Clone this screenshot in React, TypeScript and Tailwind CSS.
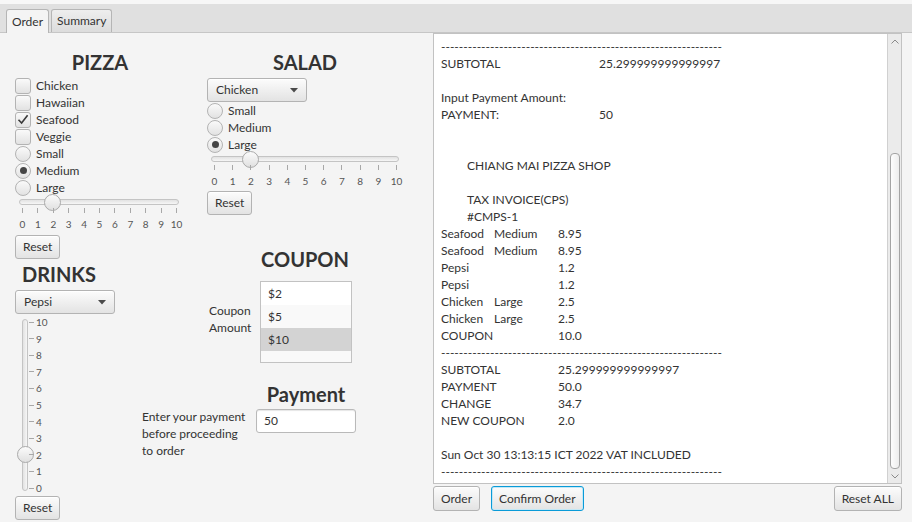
import type { ReactNode } from 'react';

const btnBase =
  'flex h-[24px] items-center rounded-[3px] border bg-linear-to-b from-[#fcfcfc] to-[#e3e3e3] px-[7px] text-[12px] text-[#333]';
const btn = `${btnBase} border-[#b3b3b3] shadow-[inset_0_1px_0_#ffffff]`;
const btnFocus = `${btnBase} border-[#0a9bd8] shadow-[inset_0_0_0_1px_#c4e8f6]`;

function Heading({ children, className = '' }: { children: ReactNode; className?: string }) {
  return <div className={`h-[24px] text-center text-[20px] font-bold leading-[24px] text-[#333] ${className}`}>{children}</div>;
}

function CheckBox({ label, checked = false }: { label: string; checked?: boolean }) {
  return (
    <div className="flex h-[17px] items-center gap-[5px]">
      <span className="flex h-[16px] w-[16px] items-center justify-center rounded-[3px] border border-[#b3b3b3] bg-linear-to-b from-[#fafafa] to-[#e2e2e2]">
        {checked ? (
          <svg width="12" height="11" viewBox="0 0 12 11">
            <path d="M1.5 5.8 L4.6 9 L10.6 1.2" fill="none" stroke="#3a3a3a" strokeWidth="1.6" />
          </svg>
        ) : null}
      </span>
      <span>{label}</span>
    </div>
  );
}

function Radio({ label, checked = false }: { label: string; checked?: boolean }) {
  return (
    <div className="flex h-[17px] items-center gap-[5px]">
      <span className="flex h-[16px] w-[16px] items-center justify-center rounded-full border border-[#b3b3b3] bg-linear-to-b from-[#fafafa] to-[#e2e2e2]">
        {checked ? <span className="h-[7px] w-[7px] rounded-full bg-[#454545]" /> : null}
      </span>
      <span>{label}</span>
    </div>
  );
}

function Combo({ value }: { value: string }) {
  return (
    <div className={`${btn} h-[23px] w-[100px] justify-between pl-[8px] pr-[8px]`}>
      <span>{value}</span>
      <svg width="8" height="5" viewBox="0 0 8 5">
        <path d="M0 0 H8 L4 4.5 Z" fill="#4a4a4a" />
      </svg>
    </div>
  );
}

const thumb =
  'absolute h-[17px] w-[17px] rounded-full border border-[#aaaaaa] bg-linear-to-b from-[#fbfbfb] to-[#e0e0e0]';

function HSlider({ width, value }: { width: number; value: number }) {
  const span = width - 6;
  const ticks = Array.from({ length: 11 }, (_, i) => i);
  return (
    <div className="relative h-[34px]" style={{ width }}>
      <div className="absolute left-0 right-0 top-[2px] h-[6px] rounded-full border border-[#c4c4c4] bg-linear-to-b from-[#e2e2e2] to-[#f6f6f6]" />
      <div className={`${thumb} top-[-3.5px]`} style={{ left: 3 + (value / 10) * span - 8.5 }} />
      {ticks.map((t) => (
        <div key={t} className="absolute top-[11px]" style={{ left: 3 + (t / 10) * span }}>
          <div className="h-[5px] w-px bg-[#a8a8a8]" />
          <div className="absolute left-1/2 top-[9px] -translate-x-1/2 text-[10px] leading-[14px] text-[#555]">{t}</div>
        </div>
      ))}
    </div>
  );
}

function VSlider({ value }: { value: number }) {
  const top = 6;
  const span = 166;
  const ticks = Array.from({ length: 11 }, (_, i) => 10 - i);
  return (
    <div className="relative h-[178px] w-[40px]">
      <div className="absolute bottom-[3px] left-[4px] top-[3px] w-[6px] rounded-full border border-[#c4c4c4] bg-linear-to-r from-[#e2e2e2] to-[#f6f6f6]" />
      <div className={`${thumb} left-[-1.5px]`} style={{ top: top + ((10 - value) / 10) * span - 8.5 }} />
      {ticks.map((t) => (
        <div key={t} className="absolute left-[11px] flex items-center gap-[2px]" style={{ top: top + ((10 - t) / 10) * span - 7 }}>
          <div className="h-px w-[5px] bg-[#a8a8a8]" />
          <span className="text-[10px] leading-[14px] text-[#555]">{t}</span>
        </div>
      ))}
    </div>
  );
}

const dashes = '-'.repeat(63);

type Line = { cells: string[]; widths?: number[]; indent?: boolean };

const receipt: Line[] = [
  { cells: [dashes] },
  { cells: ['SUBTOTAL', '25.299999999999997'], widths: [158] },
  { cells: [''] },
  { cells: ['Input Payment Amount:'] },
  { cells: ['PAYMENT:', '50'], widths: [158] },
  { cells: [''] },
  { cells: [''] },
  { cells: ['CHIANG MAI PIZZA SHOP'], indent: true },
  { cells: [''] },
  { cells: ['TAX INVOICE(CPS)'], indent: true },
  { cells: ['#CMPS-1'], indent: true },
  { cells: ['Seafood', 'Medium', '8.95'], widths: [53, 64] },
  { cells: ['Seafood', 'Medium', '8.95'], widths: [53, 64] },
  { cells: ['Pepsi', '', '1.2'], widths: [53, 64] },
  { cells: ['Pepsi', '', '1.2'], widths: [53, 64] },
  { cells: ['Chicken', 'Large', '2.5'], widths: [53, 64] },
  { cells: ['Chicken', 'Large', '2.5'], widths: [53, 64] },
  { cells: ['COUPON', '10.0'], widths: [117] },
  { cells: [dashes] },
  { cells: ['SUBTOTAL', '25.299999999999997'], widths: [117] },
  { cells: ['PAYMENT', '50.0'], widths: [117] },
  { cells: ['CHANGE', '34.7'], widths: [117] },
  { cells: ['NEW COUPON', '2.0'], widths: [117] },
  { cells: [''] },
  { cells: ['Sun Oct 30 13:13:15 ICT 2022 VAT INCLUDED'] },
  { cells: [dashes] },
];

function Receipt() {
  return (
    <div className="flex h-[451px] border border-[#c2c2c2] bg-white">
      <div className="flex-1 overflow-hidden pl-[7px] pt-[4px] text-[12px] leading-[17px] text-[#333]">
        {receipt.map((line, i) => (
          <div key={i} className={`flex h-[17px] whitespace-pre ${line.indent ? 'pl-[26px]' : ''}`}>
            {line.cells.map((c, j) => (
              <span key={j} className="shrink-0" style={line.widths?.[j] ? { width: line.widths[j] } : undefined}>
                {c}
              </span>
            ))}
          </div>
        ))}
      </div>
      <div className="flex w-[14px] flex-col border-l border-[#d0d0d0] bg-[#ebebeb]">
        <div className="flex h-[14px] items-center justify-center">
          <svg width="8" height="5" viewBox="0 0 8 5">
            <path d="M0.5 4.5 L4 1 L7.5 4.5" fill="none" stroke="#8a8a8a" strokeWidth="1" />
          </svg>
        </div>
        <div className="flex flex-1 flex-col justify-end px-[1.5px]">
          <div className="h-[316px] rounded-[4px] border border-[#a4a4a4] bg-linear-to-r from-[#fdfdfd] to-[#ededed]" />
        </div>
        <div className="flex h-[14px] items-center justify-center">
          <svg width="8" height="5" viewBox="0 0 8 5">
            <path d="M0.5 0.5 L4 4 L7.5 0.5" fill="none" stroke="#8a8a8a" strokeWidth="1" />
          </svg>
        </div>
      </div>
    </div>
  );
}

export default function App() {
  return (
    <div className="flex h-[522px] w-[912px] flex-col overflow-hidden bg-[#f4f4f4] font-['Lato',sans-serif] text-[12px] text-[#333]">
      <div className="h-[4px] bg-[#f7f7f7]" />
      <div className="flex h-[29px] items-end gap-[2px] border-b border-[#c6c6c6] bg-[#e0e0e0] pl-[6px]">
        <div className="-mb-px flex h-[24px] items-center rounded-t-[3px] border border-b-0 border-[#b5b5b5] bg-[#f4f4f4] px-[5px] text-[12px]">
          Order
        </div>
        <div className="flex h-[23px] items-center rounded-t-[3px] border border-b-0 border-[#b5b5b5] bg-linear-to-b from-[#eeeeee] to-[#dcdcdc] px-[5px] text-[12px]">
          Summary
        </div>
      </div>

      <div className="flex flex-1">
        {/* pizza + drinks */}
        <div className="flex w-[200px] flex-col pl-[15px]">
          <Heading className="-ml-[15px] mt-[17px]">PIZZA</Heading>
          <div className="mt-[3px] flex flex-col">
            <CheckBox label="Chicken" />
            <CheckBox label="Hawaiian" />
            <CheckBox label="Seafood" checked />
            <CheckBox label="Veggie" />
            <Radio label="Small" />
            <Radio label="Medium" checked />
            <Radio label="Large" />
          </div>
          <div className="ml-[4px] mt-px">
            <HSlider width={160} value={2} />
          </div>
          <div className="mt-[4px]">
            <button className={btn}>Reset</button>
          </div>
          <Heading className="mt-[3px] w-[88px]">DRINKS</Heading>
          <div className="mt-[4px]">
            <Combo value="Pepsi" />
          </div>
          <div className="mt-[2px] ml-[3px]">
            <VSlider value={2} />
          </div>
          <div className="mt-[2px]">
            <button className={btn}>Reset</button>
          </div>
        </div>

        {/* salad, coupon, payment */}
        <div className="flex w-[233px] flex-col pl-[7px]">
          <Heading className="mt-[17px] w-[196px]">SALAD</Heading>
          <div className="mt-[4px]">
            <Combo value="Chicken" />
          </div>
          <div className="flex flex-col">
            <Radio label="Small" />
            <Radio label="Medium" />
            <Radio label="Large" checked />
          </div>
          <div className="ml-[4px] mt-px">
            <HSlider width={188} value={2} />
          </div>
          <div className="mt-[3px]">
            <button className={btn}>Reset</button>
          </div>

          <Heading className="mt-[32px] w-[196px]">COUPON</Heading>
          <div className="mt-[10px] flex items-center">
            <div className="mb-[6px] ml-[2px] w-[51px] leading-[17px]">
              Coupon
              <br />
              Amount
            </div>
            <div className="flex h-[82px] w-[92px] flex-col overflow-hidden border border-[#c2c2c2] bg-[#f9f9f9]">
              <div className="h-[23px] shrink-0 bg-white pl-[7px] leading-[23px]">$2</div>
              <div className="h-[23px] shrink-0 pl-[7px] leading-[23px]">$5</div>
              <div className="h-[23px] shrink-0 bg-[#d3d3d3] pl-[7px] leading-[23px]">$10</div>
            </div>
          </div>

          <Heading className="mt-[19px] w-[198px]">Payment</Heading>
          <div className="-ml-[65px] mt-[2px] flex items-start">
            <div className="w-[114px] leading-[17px]">
              Enter your payment
              <br />
              before proceeding
              <br />
              to order
            </div>
            <div className="mt-[1px] flex h-[24px] w-[100px] items-center rounded-[3px] border border-[#b9b9b9] bg-white pl-[7px] shadow-[inset_0_1px_1px_#e6e6e6]">
              50
            </div>
          </div>
        </div>

        {/* receipt */}
        <div className="flex w-[469px] flex-col">
          <Receipt />
          <div className="mt-[2px] flex h-[25px] items-stretch justify-between">
            <div className="flex gap-[11px]">
              <button className={`${btn} h-[25px]`}>Order</button>
              <button className={`${btnFocus} h-[25px]`}>Confirm Order</button>
            </div>
            <button className={`${btn} h-[25px]`}>Reset ALL</button>
          </div>
        </div>
      </div>
    </div>
  );
}
